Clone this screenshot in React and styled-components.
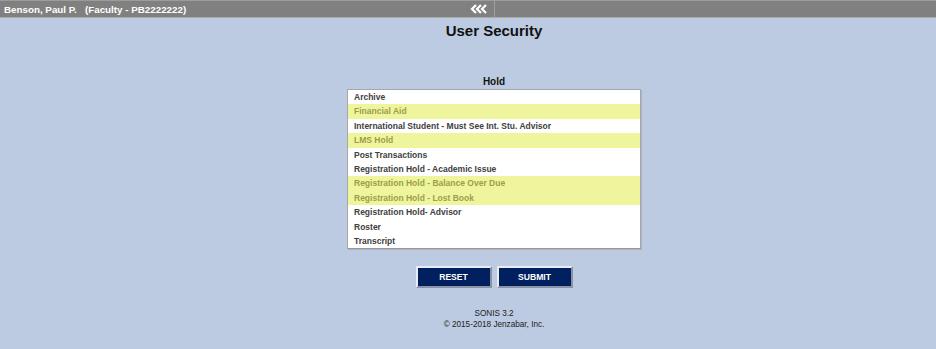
import React from "react";
import styled, { createGlobalStyle } from "styled-components";

const Global = createGlobalStyle`
  html, body { margin: 0; padding: 0; background: #bccbe1; }
  body { font-family: "Liberation Sans", Arial, sans-serif; }
`;

const Page = styled.div`
  width: 936px;
  height: 349px;
  overflow: hidden;
  background: #bccbe1;
`;

const TopBar = styled.div`
  display: flex;
  height: 18px;
  background: #808080;
  border-top: 1px solid #9c9c9c;
  border-bottom: 1px solid #a9a9a9;
  box-sizing: border-box;
`;

const TopLeft = styled.div`
  width: 495px;
  display: flex;
  align-items: center;
  justify-content: space-between;
  padding: 0 6px 0 4px;
  box-sizing: border-box;
  border-right: 1px solid #a0a0a0;
`;

const TopRight = styled.div`
  flex: 1;
`;

const UserName = styled.span`
  color: #fff;
  font-weight: bold;
  font-size: 9.8px;
  white-space: pre;
`;

const Main = styled.div`
  display: flex;
  flex-direction: column;
  align-items: center;
  padding-left: 52px;
`;

const Title = styled.h1`
  margin: 4px 0 0;
  font-size: 15px;
  line-height: 17px;
  font-weight: bold;
  color: #111;
`;

const ListLabel = styled.div`
  margin-top: 37px;
  font-size: 10px;
  line-height: 12px;
  font-weight: bold;
  color: #111;
`;

const ListBox = styled.div`
  margin-top: 1px;
  width: 294px;
  background: #fff;
  border: 1px solid #a8a8a8;
  border-bottom-color: #999;
  box-shadow: 1px 1px 0 #aab4c4;
  box-sizing: border-box;
  display: flex;
  flex-direction: column;
`;

const Row = styled.div`
  height: 14.4px;
  line-height: 14.4px;
  padding-left: 6px;
  font-size: 8.5px;
  font-weight: bold;
  color: ${(p) => (p.$selected ? "#9d9d4c" : "#404040")};
  background: ${(p) => (p.$selected ? "#eef59c" : "#fff")};
  white-space: nowrap;
`;

const Buttons = styled.div`
  display: flex;
  gap: 5px;
  margin-top: 17px;
`;

const Button = styled.button`
  width: 76px;
  height: 22px;
  background: #002060;
  color: #fff;
  font-family: "Liberation Sans", Arial, sans-serif;
  font-weight: bold;
  font-size: 8.6px;
  border: 2px solid;
  border-color: #e8ecf4 #8a93a6 #8a93a6 #e8ecf4;
  padding: 0;
  cursor: pointer;
`;

const Footer = styled.div`
  margin-top: 20px;
  text-align: center;
  font-size: 8.2px;
  line-height: 11px;
  color: #222;
`;

const Chevrons = () => (
  <svg width="18" height="10" viewBox="0 0 18 10">
    <g fill="none" stroke="#fff" strokeWidth="2.2" strokeLinejoin="miter">
      <polyline points="6,1 2,5 6,9" />
      <polyline points="11,1 7,5 11,9" />
      <polyline points="16,1 12,5 16,9" />
    </g>
  </svg>
);

const items = [
  ["Archive", false],
  ["Financial Aid", true],
  ["International Student - Must See Int. Stu. Advisor", false],
  ["LMS Hold", true],
  ["Post Transactions", false],
  ["Registration Hold - Academic Issue", false],
  ["Registration Hold - Balance Over Due", true],
  ["Registration Hold - Lost Book", true],
  ["Registration Hold- Advisor", false],
  ["Roster", false],
  ["Transcript", false],
];

export default function App() {
  return (
    <Page>
      <Global />
      <TopBar>
        <TopLeft>
          <UserName>{"Benson, Paul P.   (Faculty - PB2222222)"}</UserName>
          <Chevrons />
        </TopLeft>
        <TopRight />
      </TopBar>
      <Main>
        <Title>User Security</Title>
        <ListLabel>Hold</ListLabel>
        <ListBox>
          {items.map(([label, sel]) => (
            <Row key={label} $selected={sel}>
              {label}
            </Row>
          ))}
        </ListBox>
        <Buttons>
          <Button>RESET</Button>
          <Button>SUBMIT</Button>
        </Buttons>
        <Footer>
          SONIS 3.2
          <br />© 2015-2018 Jenzabar, Inc.
        </Footer>
      </Main>
    </Page>
  );
}
